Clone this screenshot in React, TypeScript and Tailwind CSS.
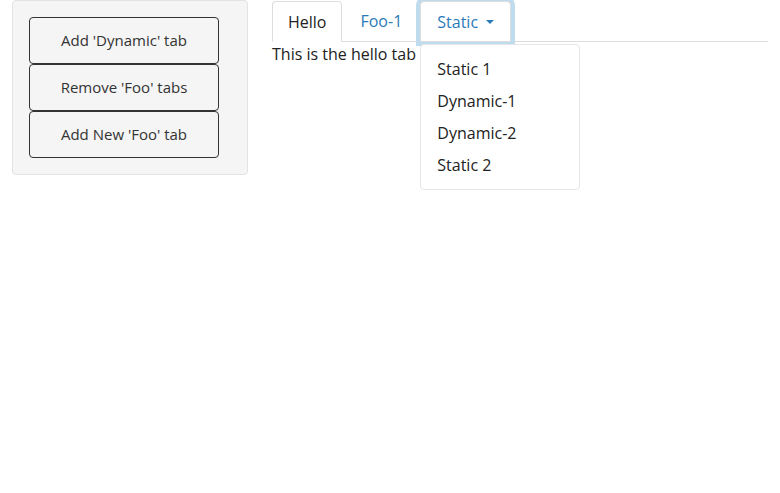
import { useState } from "react";

const font = { fontFamily: '"Open Sans", "Noto Sans", sans-serif' };

export default function App() {
  const [tab, setTab] = useState("Hello");
  return (
    <div className="min-h-[493px] w-[780px] bg-white text-base text-[#333]" style={font}>
      <div className="flex">
        {/* sidebar */}
        <div className="w-[260px] px-3">
          <div className="rounded bg-[#f5f5f5] border border-[#e3e3e3] pt-4 pb-4 pl-4">
            <div className="flex flex-col w-[190px]">
              <SideButton label="Add 'Dynamic' tab" />
              <SideButton label="Remove 'Foo' tabs" />
              <SideButton label="Add New 'Foo' tab" />
            </div>
          </div>
        </div>

        {/* main */}
        <div className="w-[520px] px-3">
          <ul className="flex border-b border-[#ddd] h-[42px]">
            <li
              onClick={() => setTab("Hello")}
              className="mt-px h-[41px] mr-[2px] px-[15px] flex items-center rounded-t border border-[#ddd] border-b-white bg-white text-[#222] cursor-pointer"
            >
              Hello
            </li>
            <li
              onClick={() => setTab("Foo-1")}
              className="mt-px h-[40px] mr-[2px] px-4 flex items-center text-[#2a7ab8] cursor-pointer"
            >
              Foo-1
            </li>
            <li className="relative h-[41px] mt-px">
              <div className="h-[41px] px-4 flex items-center gap-2 rounded-t border border-[#ddd] bg-white text-[#2a7ab8] ring-4 ring-[#bfdcef]">
                Static
                <span className="inline-block w-0 h-0 border-l-4 border-r-4 border-t-4 border-l-transparent border-r-transparent border-t-[#2a7ab8] mt-px" />
              </div>
              <div className="absolute left-0 top-[43px] w-[160px] rounded border border-[#e6e6e6] bg-white py-2 z-10">
                {["Static 1", "Dynamic-1", "Dynamic-2", "Static 2"].map((t) => (
                  <div key={t} className="h-8 px-4 flex items-center text-[#222] whitespace-nowrap">
                    {t}
                  </div>
                ))}
              </div>
            </li>
          </ul>
          <div className="pt-[2px] leading-5 text-[#222]">
            {tab === "Hello" ? "This is the hello tab" : "This is the foo tab"}
          </div>
        </div>
      </div>
    </div>
  );
}

function SideButton({ label }: { label: string }) {
  return (
    <button className="h-[47px] w-[190px] rounded border border-[#333] bg-[#f5f5f5] text-[15px] text-[#333]">
      {label}
    </button>
  );
}
